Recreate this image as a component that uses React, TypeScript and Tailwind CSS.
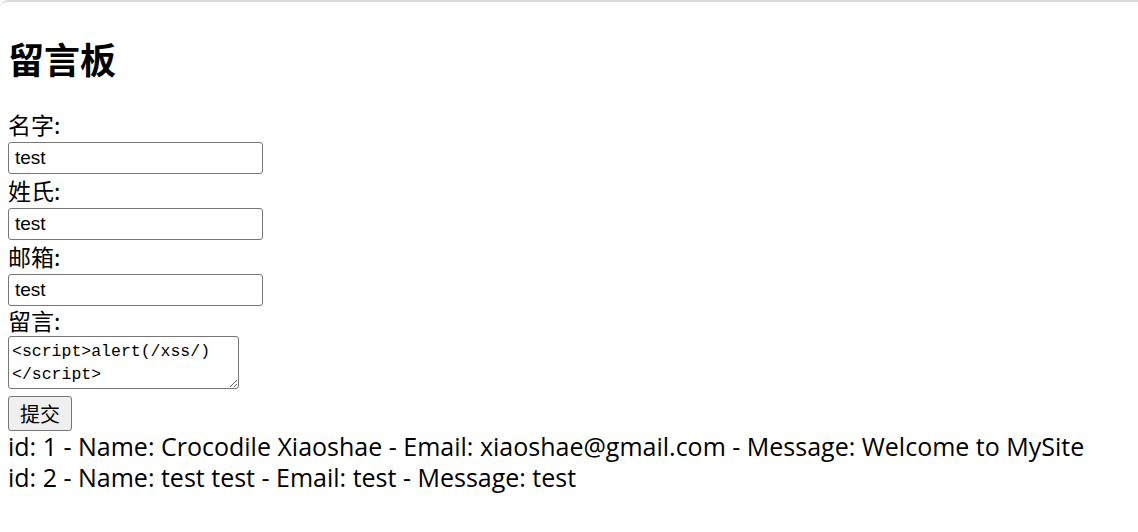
import React from "react";

const labelCls = "block text-[23px] text-black font-['Noto_Sans_CJK_SC',sans-serif]";
const inputCls =
  "block w-[255px] h-[32px] border border-[#767676] rounded-[3px] px-[6px] text-[19px] text-black bg-white outline-none font-['Liberation_Sans',Arial,sans-serif]";

export default function App() {
  const fields = [
    { label: "名字:", value: "test" },
    { label: "姓氏:", value: "test" },
    { label: "邮箱:", value: "test" },
  ];

  return (
    <div className="min-h-[532px] bg-white border-t-2 border-[#dadce0] rounded-tl-[8px] font-['Noto_Sans','Noto_Sans_CJK_SC',sans-serif] text-black">
      <div className="px-[8px]">
        <h1 className="pt-[30px] h-[106px] text-[36px] font-bold leading-[52px] font-['Noto_Sans_CJK_SC',sans-serif]">
          留言板
        </h1>

        <form>
          {fields.map((f) => (
            <div key={f.label}>
              <label className={labelCls + " h-[34px] leading-[33px]"}>{f.label}</label>
              <input className={inputCls} defaultValue={f.value} />
            </div>
          ))}
          <label className={labelCls + " h-[30px] leading-[29px]"}>留言:</label>
          <textarea
            className="block w-[231px] h-[53px] border border-[#767676] rounded-[3px] px-[3px] pt-[3px] pb-0 text-[16.5px] leading-[23px] text-black font-['Liberation_Mono',monospace] resize-y"
            defaultValue={"<script>alert(/xss/)\n</script>"}
          />
          <button
            type="button"
            className="mt-[7px] block w-[64px] h-[35px] bg-[#efefef] border border-[#767676] rounded-[3px] text-[20px] leading-none font-['Noto_Sans_CJK_SC',sans-serif]"
          >
            提交
          </button>
        </form>

        <div className="text-[25px] leading-[31px] font-['Open_Sans','Noto_Sans',sans-serif]">
          <div>id: 1 - Name: Crocodile Xiaoshae - Email: xiaoshae@gmail.com - Message: Welcome to MySite</div>
          <div>id: 2 - Name: test test - Email: test - Message: test</div>
        </div>
      </div>
    </div>
  );
}
